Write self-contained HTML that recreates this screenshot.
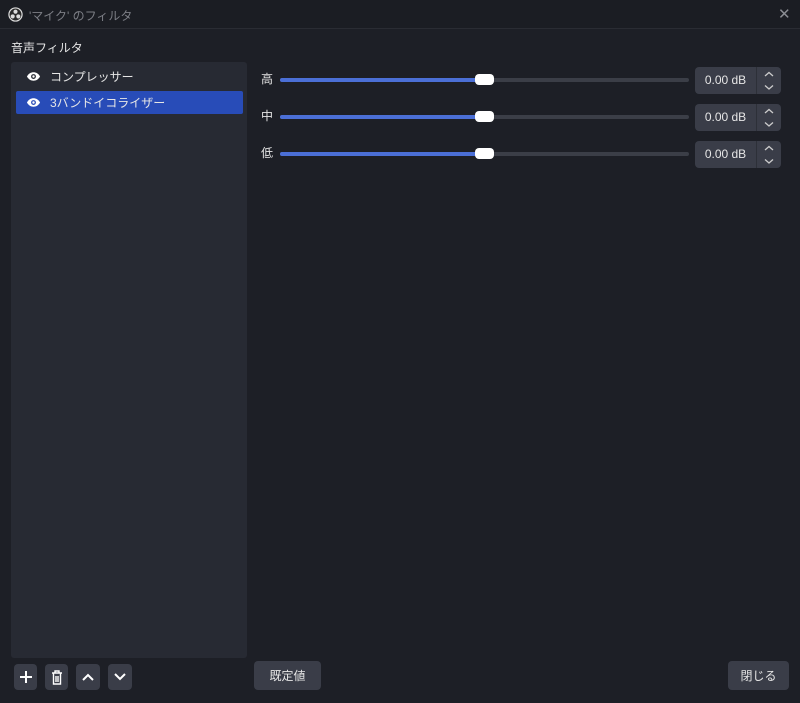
<!DOCTYPE html>
<html><head><meta charset="utf-8"><style>
*{box-sizing:border-box;margin:0;padding:0}
body{width:800px;height:703px;background:#1d1f26;font-family:"Liberation Sans","Noto Sans CJK JP",sans-serif;color:#e6e6e6;font-size:12px;position:relative;overflow:hidden}
.abs{position:absolute}
.title{left:0;top:0;width:800px;height:29px;background:#1b1d23;border-bottom:1px solid #2a2c33}
.list{left:11px;top:62px;width:236px;height:596px;background:#272a33;border-radius:3px}
.item{left:16px;width:227px;height:23px;border-radius:2px;display:flex;align-items:center;padding-left:10px}
.item span{margin-left:9px}
.track{left:280px;width:409px;height:4px;background:#3b3e47;border-radius:2px}
.fill{left:280px;width:200px;height:4px;background:#4b6fd6;border-radius:2px}
.handle{left:475px;width:19px;height:11px;background:#fff;border-radius:4px}
.spin{left:695px;width:86px;height:27px;background:#3a3d48;border-radius:4px}
.spin .v{position:absolute;left:0;top:0;width:62px;height:27px;line-height:27px;text-align:center;font-size:12px;border-right:1px solid #2d3038}
.spin svg{position:absolute;left:68px;top:3px}
.btn{background:#3a3d48;border-radius:4px;display:flex;align-items:center;justify-content:center}
.lbl{left:261px;font-size:12px}
</style></head><body>
<div class="abs title">
<svg class="abs" style="left:8px;top:7px" width="15" height="15" viewBox="0 0 16 16"><circle cx="8" cy="8" r="7" fill="#2b2b2b" stroke="#ddd" stroke-width="1.3"/><circle cx="8" cy="5" r="2.2" fill="#ddd"/><circle cx="5" cy="10" r="2.2" fill="#ddd"/><circle cx="11" cy="10" r="2.2" fill="#ddd"/></svg>
<div class="abs" style="left:29px;top:7px;color:#7d7f86;font-size:12px">'マイク' のフィルタ</div>
<div class="abs" style="left:778px;top:5px;color:#8a8c92;font-size:15px">✕</div>
</div>
<div class="abs" style="left:11px;top:39px;font-size:12px">音声フィルタ</div>
<div class="abs list"></div>
<div class="abs item" style="top:65px"><svg width="15" height="11" viewBox="0 0 16 11"><path d="M1 5.5C3 2 5.5 1 8 1s5 1 7 4.5C13 9 10.5 10 8 10S3 9 1 5.5z" fill="#fff"/><circle cx="8" cy="5.5" r="2.6" fill="#272a33"/><circle cx="8" cy="5.5" r="1.3" fill="#fff"/></svg><span>コンプレッサー</span></div>
<div class="abs item" style="top:91px;background:#284cb8"><svg width="15" height="11" viewBox="0 0 16 11"><path d="M1 5.5C3 2 5.5 1 8 1s5 1 7 4.5C13 9 10.5 10 8 10S3 9 1 5.5z" fill="#fff"/><circle cx="8" cy="5.5" r="2.6" fill="#284cb8"/><circle cx="8" cy="5.5" r="1.3" fill="#fff"/></svg><span>3バンドイコライザー</span></div>

<div class="abs lbl" style="top:70px">高</div>
<div class="abs track" style="top:78px"></div><div class="abs fill" style="top:78px"></div><div class="abs handle" style="top:74px"></div>
<div class="abs spin" style="top:67px"><div class="v">0.00 dB</div><svg width="12" height="22"><path d="M2 6l4-3.5 4 3.5M2 15.5l4 3.5 4-3.5" stroke="#ccc" stroke-width="1.3" fill="none"/></svg></div>

<div class="abs lbl" style="top:107px">中</div>
<div class="abs track" style="top:115px"></div><div class="abs fill" style="top:115px"></div><div class="abs handle" style="top:111px"></div>
<div class="abs spin" style="top:104px"><div class="v">0.00 dB</div><svg width="12" height="22"><path d="M2 6l4-3.5 4 3.5M2 15.5l4 3.5 4-3.5" stroke="#ccc" stroke-width="1.3" fill="none"/></svg></div>

<div class="abs lbl" style="top:144px">低</div>
<div class="abs track" style="top:152px"></div><div class="abs fill" style="top:152px"></div><div class="abs handle" style="top:148px"></div>
<div class="abs spin" style="top:141px"><div class="v">0.00 dB</div><svg width="12" height="22"><path d="M2 6l4-3.5 4 3.5M2 15.5l4 3.5 4-3.5" stroke="#ccc" stroke-width="1.3" fill="none"/></svg></div>

<div class="abs btn" style="left:14px;top:664px;width:23px;height:26px"><svg width="14" height="14"><path d="M7 1v12M1 7h12" stroke="#fff" stroke-width="2"/></svg></div>
<div class="abs btn" style="left:45px;top:664px;width:23px;height:26px"><svg width="12" height="15"><path d="M1 3h10M4 3V1h4v2M2.5 3v11h7V3M5 6v6M7 6v6" stroke="#fff" stroke-width="1.4" fill="none"/></svg></div>
<div class="abs btn" style="left:76px;top:664px;width:24px;height:26px"><svg width="14" height="10"><path d="M2 8l5-5 5 5" stroke="#fff" stroke-width="2" fill="none"/></svg></div>
<div class="abs btn" style="left:108px;top:664px;width:24px;height:26px"><svg width="14" height="10"><path d="M2 2l5 5 5-5" stroke="#fff" stroke-width="2" fill="none"/></svg></div>
<div class="abs btn" style="left:254px;top:661px;width:67px;height:29px">既定値</div>
<div class="abs btn" style="left:728px;top:661px;width:61px;height:29px">閉じる</div>
</body></html>
